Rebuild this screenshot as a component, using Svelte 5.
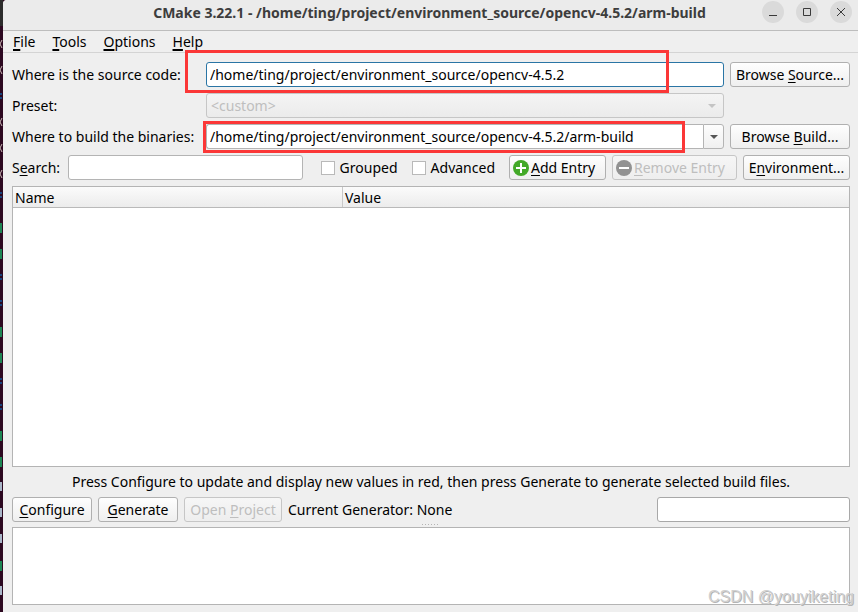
<script>
  let source = $state('/home/ting/project/environment_source/opencv-4.5.2');
  let build = $state('/home/ting/project/environment_source/opencv-4.5.2/arm-build');
  let search = $state('');
  let grouped = $state(false);
  let advanced = $state(false);

  // [text before the mnemonic, mnemonic, rest]
  const menus = [
    ['', 'F', 'ile'],
    ['', 'T', 'ools'],
    ['', 'O', 'ptions'],
    ['', 'H', 'elp']
  ];

  // line ends of the terminal behind the window
  const prompts = [44, 70, 122, 148, 174];
  const dirs = [97, 196, 278, 304, 382, 408];
  const execs = [228, 254, 332, 358, 436, 462, 566];
  const plain = [487, 513, 539, 591];
</script>

{#snippet mnemonic(before, key, rest)}
  {before}<u>{key}</u>{rest}
{/snippet}

<div class="desktop">
  <svg class="terminal" width="3" height="612" aria-hidden="true">
    <rect width="3" height="26" fill="#2b2b2b" />
    {#each prompts as y (y)}
      <path d="M2 {y - 4}L0 {y}L2 {y + 4}" fill="none" stroke="#c9b6b4" />
    {/each}
    {#each dirs as y (y)}
      <path d="M0 {y - 3}h2M0 {y + 1}h2" stroke="#17457e" stroke-width="2" />
    {/each}
    {#each execs as y (y)}
      <rect y={y - 5} width="2" height="10" fill="#1d8654" />
    {/each}
    {#each plain as y (y)}
      <path d="M0 {y - 4}H1V{y + 4}" fill="none" stroke="#a9b6c8" stroke-width="2" />
    {/each}
  </svg>

  <div class="window">
    <header>
      <h1>CMake 3.22.1 - /home/ting/project/environment_source/opencv-4.5.2/arm-build</h1>
      <div class="controls">
        <button aria-label="Minimize">
          <svg width="22" height="22"><path d="M7 14.5h8" /></svg>
        </button>
        <button aria-label="Maximize">
          <svg width="22" height="22"><path d="M7.5 7.5h7v7h-7z" /></svg>
        </button>
        <button aria-label="Close">
          <svg width="22" height="22"><path d="M7 7l8 8M15 7l-8 8" /></svg>
        </button>
      </div>
    </header>

    <nav>
      {#each menus as [before, key, rest] (key)}
        <button>{@render mnemonic(before, key, rest)}</button>
      {/each}
    </nav>

    <main>
      <div class="paths">
        <label for="source">Where is the source code:</label>
        <div class="field">
          <input id="source" class="focused" type="text" bind:value={source} />
          <span class="mark mark-source"></span>
        </div>
        <button class="btn">{@render mnemonic('Browse ', 'S', 'ource...')}</button>

        <label for="preset">Preset:</label>
        <div class="field">
          <select id="preset" disabled>
            <option>&lt;custom&gt;</option>
          </select>
          <svg class="arrow" width="8" height="4"><path d="M0 0h8L4 4z" fill="#c4c4c4" /></svg>
        </div>
        <span></span>

        <label for="build">Where to build the binaries:</label>
        <div class="field editable">
          <input id="build" type="text" bind:value={build} />
          <button aria-label="Show recent build directories">
            <svg width="8" height="4"><path d="M0 0h8L4 4z" fill="#555" /></svg>
          </button>
          <span class="mark mark-build"></span>
        </div>
        <button class="btn">{@render mnemonic('Browse ', 'B', 'uild...')}</button>
      </div>

      <div class="tools">
        <label for="search">{@render mnemonic('S', 'e', 'arch:')}</label>
        <input id="search" type="text" bind:value={search} />
        <div class="checks">
          <label><input type="checkbox" bind:checked={grouped} />Grouped</label>
          <label><input type="checkbox" bind:checked={advanced} />Advanced</label>
        </div>
        <button class="btn add">
          <svg width="16" height="16">
            <circle cx="8" cy="8" r="8" fill="#43a928" />
            <path d="M3 8h10M8 3v10" stroke="#fff" stroke-width="2" />
          </svg>
          <span>{@render mnemonic('', 'A', 'dd Entry')}</span>
        </button>
        <button class="btn remove" disabled>
          <svg width="16" height="16">
            <circle cx="8" cy="8" r="8" fill="#929292" />
            <path d="M3 8h10" stroke="#fff" stroke-width="2" />
          </svg>
          <span>{@render mnemonic('', 'R', 'emove Entry')}</span>
        </button>
        <button class="btn environment">{@render mnemonic('E', 'n', 'vironment...')}</button>
      </div>

      <div class="cache">
        <table>
          <thead>
            <tr><th>Name</th><th>Value</th></tr>
          </thead>
        </table>
      </div>

      <p>
        Press Configure to update and display new values in red, then press Generate to generate
        selected build files.
      </p>

      <div class="actions">
        <button class="btn">{@render mnemonic('', 'C', 'onfigure')}</button>
        <button class="btn">{@render mnemonic('', 'G', 'enerate')}</button>
        <button class="btn open" disabled>{@render mnemonic('Open ', 'P', 'roject')}</button>
        <span>Current Generator: None</span>
        <progress value="0" max="100" aria-label="Progress"></progress>
      </div>

      <div class="grip"></div>
      <textarea readonly aria-label="Output"></textarea>
    </main>
  </div>

  <span class="watermark">CSDN @youyiketing</span>
</div>

<style>
  :global(body) {
    margin: 0;
    background: #2c0820;
  }

  .desktop {
    position: relative;
    display: flex;
    min-height: 100vh;
    overflow: hidden;
    font: 14px/20px 'Noto Sans', 'Open Sans', sans-serif;
    color: #000;
  }

  .terminal {
    flex: none;
  }

  .window {
    flex: 1;
    min-width: 0;
    display: flex;
    flex-direction: column;
    background: #efefef;
    border-top-left-radius: 4px;
  }

  button,
  input,
  select,
  textarea {
    box-sizing: border-box;
    margin: 0;
    font: inherit;
    color: inherit;
  }

  u {
    text-underline-offset: 2px;
    text-decoration-thickness: 1px;
  }

  header {
    display: grid;
    grid-template-columns: 1fr auto;
    align-items: center;
    height: 30px;
    padding-right: 6px;
    background: #ebebeb;
    border-bottom: 1px solid #bdbdbd;
    border-top-left-radius: 4px;
  }

  h1 {
    margin: 0;
    padding-left: 94px;
    padding-bottom: 4px;
    font-size: 14px;
    line-height: 20px;
    text-align: center;
    white-space: nowrap;
    color: #3d3d3d;
  }

  .controls {
    display: flex;
    gap: 12px;
    padding-bottom: 6px;
  }

  .controls button {
    display: flex;
    padding: 0;
    border: 0;
    border-radius: 50%;
    background: #dadada;
  }

  .controls path {
    fill: none;
    stroke: #3a3a3a;
  }

  nav {
    display: flex;
    gap: 17px;
    height: 21px;
    padding-left: 10px;
    border-bottom: 1px solid #d4d4d4;
  }

  nav button {
    padding: 0;
    border: 0;
    background: none;
  }

  nav u {
    text-decoration-thickness: 2px;
  }

  main {
    flex: 1;
    display: flex;
    flex-direction: column;
    padding: 9px 8px 7px 9px;
  }

  .paths {
    display: grid;
    grid-template-columns: 188px 1fr 120px;
    gap: 6px;
    align-items: center;
  }

  .paths label {
    white-space: nowrap;
  }

  .field {
    position: relative;
    display: flex;
  }

  input[type='text'] {
    flex: 1;
    min-width: 0;
    height: 25px;
    padding: 0 3px;
    background: #fff;
    border: 1px solid #b4b4b4;
    border-radius: 3px;
    outline: none;
  }

  input[type='text'].focused {
    border-color: #2a75a5;
  }

  select {
    flex: 1;
    height: 25px;
    padding: 0 4px;
    appearance: none;
    background: linear-gradient(#f4f4f4, #ebebeb);
    border: 1px solid #c6c6c6;
    border-radius: 3px;
    color: #bebebe;
    opacity: 1;
  }

  .arrow {
    position: absolute;
    right: 8px;
    top: 11px;
  }

  .editable input[type='text'] {
    border-right: 0;
    border-radius: 3px 0 0 3px;
  }

  .editable button {
    display: flex;
    align-items: center;
    justify-content: center;
    width: 21px;
    padding: 0;
    border: 1px solid #b4b4b4;
    border-radius: 0 3px 3px 0;
    background: linear-gradient(#fdfdfd, #f0f0f0);
  }

  .mark {
    position: absolute;
    border: 3px solid #fb3737;
    pointer-events: none;
  }

  .mark-source {
    inset: -12px 55px -6px -21px;
  }

  .mark-build {
    inset: -3px 39px -4px -3px;
  }

  .btn {
    height: 25px;
    padding: 0 2px;
    white-space: nowrap;
    background: linear-gradient(#fefefe, #efefef);
    border: 1px solid #b0b0b0;
    border-radius: 3px;
  }

  .btn:disabled {
    background: linear-gradient(#f6f6f6, #eee);
    border-color: #c6c6c6;
    color: #bebebe;
  }

  .tools {
    display: flex;
    align-items: center;
    gap: 6px;
    margin: 6px 0;
  }

  .tools > label {
    width: 50px;
  }

  .checks {
    display: flex;
    gap: 12px;
    padding: 0 8px 0 12px;
  }

  .checks label {
    display: flex;
    align-items: center;
    gap: 5px;
    min-width: 79px;
  }

  input[type='checkbox'] {
    appearance: none;
    width: 14px;
    height: 14px;
    background: #fff;
    border: 1px solid #b9b9b9;
  }

  input[type='checkbox']:checked {
    background: #308cc6;
  }

  .add,
  .remove {
    display: flex;
    align-items: center;
    gap: 2px;
    padding: 0 3px;
  }

  .add {
    width: 97px;
  }

  .remove {
    width: 125px;
  }

  .environment {
    width: 107px;
  }

  .cache {
    flex: 1;
    background: #fff;
    border: 1px solid #b4b4b4;
  }

  table {
    width: 100%;
    table-layout: fixed;
    border-collapse: collapse;
  }

  thead {
    background: linear-gradient(#fbfbfb, #ebebeb);
  }

  th {
    height: 19px;
    padding: 1px 2px 0;
    line-height: 19px;
    font-weight: normal;
    text-align: left;
    border-bottom: 1px solid #b9b9b9;
  }

  th:first-child {
    width: 325px;
    border-right: 1px solid #c9c9c9;
  }

  p {
    margin: 5px 0;
    text-align: center;
  }

  .actions {
    display: flex;
    align-items: center;
    gap: 6px;
  }

  .actions .btn {
    width: 80px;
  }

  .actions .open {
    width: 98px;
  }

  progress {
    box-sizing: border-box;
    width: 193px;
    height: 25px;
    margin-left: auto;
    appearance: none;
    background: #fff;
    border: 1px solid #a8a8a8;
    border-radius: 3px;
  }

  progress::-webkit-progress-bar {
    background: none;
  }

  .grip {
    width: 18px;
    height: 1px;
    margin: 2px auto;
    background: repeating-linear-gradient(90deg, #b4b4b4 0 1px, transparent 1px 3px);
  }

  textarea {
    height: 78px;
    padding: 2px;
    resize: none;
    background: #fff;
    border: 1px solid #b4b4b4;
    outline: none;
  }

  .watermark {
    position: absolute;
    right: 4px;
    bottom: 5px;
    font: 16px/20px 'Liberation Sans', Arial, sans-serif;
    color: #d0d0d0;
    text-shadow: 1px 1px 0 #b4b4b4;
  }
</style>
